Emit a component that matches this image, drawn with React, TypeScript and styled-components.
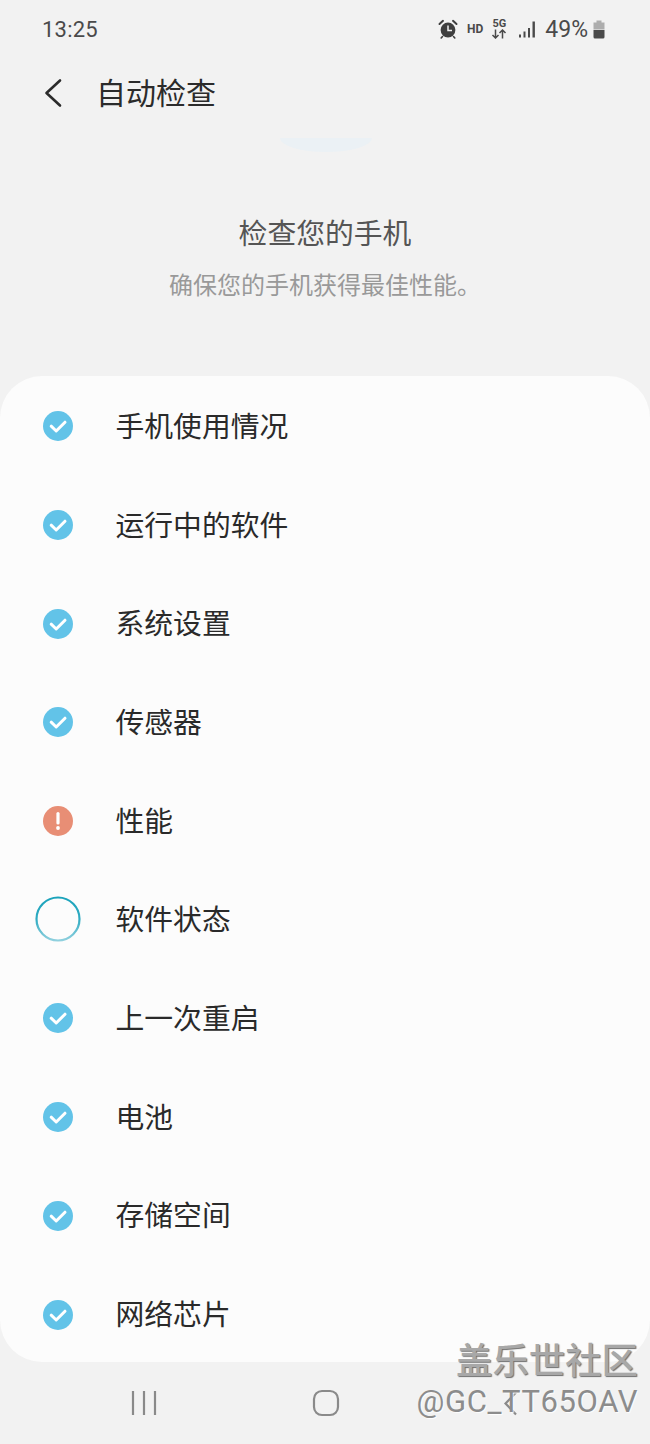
import React from "react";
import styled, { createGlobalStyle } from "styled-components";

const Global = createGlobalStyle`
  html, body { margin: 0; padding: 0; background: #f2f2f2; }
  body { font-family: "Roboto", "Noto Sans CJK SC", sans-serif; }
`;

const CJK = `"Noto Sans CJK SC", "Noto Sans CJK JP", sans-serif`;

const Screen = styled.div`
  position: relative;
  width: 650px;
  height: 1444px;
  overflow: hidden;
  background: #f2f2f2;
  display: flex;
  flex-direction: column;
`;

const StatusBar = styled.div`
  height: 58px;
  padding: 0 44px 0 42px;
  display: flex;
  align-items: center;
  justify-content: space-between;
  color: #4a4a4a;
`;

const Clock = styled.span`
  font: 400 22px Roboto, sans-serif;
  letter-spacing: 0.2px;
`;

const StatusIcons = styled.div`
  display: flex;
  align-items: center;
`;

const HD = styled.span`
  font: 700 12px Roboto, sans-serif;
  margin-left: 9px;
  color: #4a4a4a;
`;

const FiveG = styled.span`
  margin-left: 8px;
  display: flex;
  flex-direction: column;
  align-items: center;
  font: 700 11px/10px Roboto, sans-serif;
`;

const Percent = styled.span`
  font: 400 23px Roboto, sans-serif;
  margin-left: 7px;
`;

const Header = styled.div`
  height: 70px;
  display: flex;
  align-items: center;
  padding-left: 44px;
`;

const Title = styled.h1`
  margin: 0 0 4px 33px;
  font: 400 30px ${CJK};
  color: #2b2b2b;
`;

const Hero = styled.div`
  position: relative;
  height: 248px;
  display: flex;
  flex-direction: column;
  align-items: center;
`;

const Blob = styled.div`
  position: absolute;
  top: 10px;
  left: 280px;
  width: 92px;
  height: 14px;
  border-radius: 0 0 46px 46px / 0 0 14px 14px;
  background: #ebf1f5;
`;

const HeroTitle = styled.h2`
  margin: 83px 0 0;
  height: 42px;
  line-height: 42px;
  font-size: 28.8px;
  font-weight: 400;
  font-family: ${CJK};
  color: #555;
`;

const HeroSub = styled.p`
  margin: 14px 0 0;
  height: 34px;
  line-height: 34px;
  font-size: 24px;
  font-family: ${CJK};
  color: #999;
`;

const Card = styled.div`
  height: 986px;
  box-sizing: border-box;
  padding-top: 1px;
  background: #fcfcfc;
  border-radius: 42px;
`;

const Row = styled.div`
  height: 98.7px;
  display: flex;
  align-items: center;
`;

const IconSlot = styled.div`
  width: 116px;
  padding-left: 35px;
  box-sizing: border-box;
  display: flex;
  align-items: center;
`;

const Label = styled.span`
  font: 400 28.8px ${CJK};
  color: #2a2a2a;
  margin: 0 0 4px -0.5px;
`;

const NavBar = styled.div`
  flex: 1;
  position: relative;
  display: flex;
  align-items: center;
  padding-bottom: 0;
`;

const NavSlot = styled.div<{ $left: number }>`
  margin-left: ${(p) => p.$left}px;
  display: flex;
`;

const Watermark = styled.div`
  position: absolute;
  right: 12px;
  bottom: 22px;
  display: flex;
  flex-direction: column;
  align-items: flex-end;
  color: #8c8c8c;
  text-shadow: 1px 1px 1px rgba(255, 255, 255, 0.9);
`;

const WatermarkTitle = styled.span`
  font: 500 36.4px/44px ${CJK};
  color: #a8a8a8;
  text-shadow: 1px 1px 1px #6f6f6f;
  margin-bottom: 2px;
`;

const WatermarkId = styled.span`
  font: 400 31px/40px Roboto, sans-serif;
  letter-spacing: 0.6px;
`;

const BackOverlay = styled.svg`
  position: absolute;
  left: 503px;
  top: 1391px;
`;

const CheckIcon = () => (
  <svg width="46" height="46" viewBox="0 0 46 46">
    <circle cx="23" cy="23" r="15" fill="#62c3e8" />
    <path d="M16.2 23.2l5 4.8 8.8-8.8" fill="none" stroke="#fff" strokeWidth="3" strokeLinecap="round" strokeLinejoin="round" />
  </svg>
);

const WarnIcon = () => (
  <svg width="46" height="46" viewBox="0 0 46 46">
    <circle cx="23" cy="23" r="15" fill="#e88e75" />
    <path d="M23 15.5v9.5" stroke="#fff" strokeWidth="3.2" strokeLinecap="round" />
    <circle cx="23" cy="30" r="1.9" fill="#fff" />
  </svg>
);

const SpinnerIcon = () => (
  <svg width="46" height="46" viewBox="0 0 46 46" style={{ marginTop: -2 }}>
    <defs>
      <linearGradient id="spin" x1="0" y1="0" x2="0" y2="1">
        <stop offset="0" stopColor="#1ba3bb" />
        <stop offset="0.5" stopColor="#2fabc2" />
        <stop offset="1" stopColor="#8fd0de" />
      </linearGradient>
    </defs>
    <circle cx="23" cy="23" r="21.5" fill="none" stroke="url(#spin)" strokeWidth="2.2" />
  </svg>
);

const icons = { ok: <CheckIcon />, warn: <WarnIcon />, busy: <SpinnerIcon /> };

const items: { label: string; icon: keyof typeof icons }[] = [
  { label: "手机使用情况", icon: "ok" },
  { label: "运行中的软件", icon: "ok" },
  { label: "系统设置", icon: "ok" },
  { label: "传感器", icon: "ok" },
  { label: "性能", icon: "warn" },
  { label: "软件状态", icon: "busy" },
  { label: "上一次重启", icon: "ok" },
  { label: "电池", icon: "ok" },
  { label: "存储空间", icon: "ok" },
  { label: "网络芯片", icon: "ok" },
];

export default function App() {
  return (
    <Screen>
      <Global />
      <StatusBar>
        <Clock>13:25</Clock>
        <StatusIcons>
          <svg width="20" height="20" viewBox="0 0 20 20">
            <circle cx="10" cy="11" r="7.4" fill="#3f3f3f" />
            <path d="M10 6.5V11.5H14" fill="none" stroke="#f2f2f2" strokeWidth="1.5" />
            <path d="M1.5 5L5 1.8M18.5 5L15 1.8" stroke="#3f3f3f" strokeWidth="2" strokeLinecap="round" />
            <path d="M4.5 17.5L3.2 19M15.5 17.5L16.8 19" stroke="#3f3f3f" strokeWidth="1.6" strokeLinecap="round" />
          </svg>
          <HD>HD</HD>
          <FiveG>
            5G
            <svg width="16" height="10" viewBox="0 0 16 10">
              <path d="M4.5 0.5V9M1.5 6L4.5 9L7.5 6M11.5 9.5V1M8.5 4L11.5 1L14.5 4" fill="none" stroke="#4a4a4a" strokeWidth="1.5" />
            </svg>
          </FiveG>
          <svg width="20" height="18" viewBox="0 0 20 18" style={{ marginLeft: 11 }}>
            <path d="M1 14.5h2v3H1zM5.5 11.5h2v6h-2zM10 8h2v9.5h-2zM14.5 1.5h2.4v16h-2.4z" fill="#4a4a4a" />
          </svg>
          <Percent>49%</Percent>
          <svg width="14" height="19" viewBox="0 0 14 19" style={{ marginLeft: 4 }}>
            <path d="M4.5 0.5h5v2h3v7h-11v-7h3z" fill="#adadad" />
            <path d="M1.5 10h11v7a1.5 1.5 0 0 1-1.5 1.5h-8a1.5 1.5 0 0 1-1.5-1.5z" fill="#4a4a4a" />
          </svg>
        </StatusIcons>
      </StatusBar>
      <Header>
        <svg width="20" height="30" viewBox="0 0 20 30" style={{ marginLeft: -1 }}>
          <path d="M17 2.5L3.5 15L17 27.5" fill="none" stroke="#2b2b2b" strokeWidth="2.6" strokeLinecap="round" strokeLinejoin="round" />
        </svg>
        <Title>自动检查</Title>
      </Header>
      <Hero>
        <Blob />
        <HeroTitle>检查您的手机</HeroTitle>
        <HeroSub>确保您的手机获得最佳性能。</HeroSub>
      </Hero>
      <Card>
        {items.map((it) => (
          <Row key={it.label}>
            <IconSlot>{icons[it.icon]}</IconSlot>
            <Label>{it.label}</Label>
          </Row>
        ))}
      </Card>
      <NavBar>
        <NavSlot $left={131}>
          <svg width="26" height="26" viewBox="0 0 26 26">
            <path d="M2 1v24M13 1v24M24 1v24" stroke="#8a8a8a" strokeWidth="2.2" />
          </svg>
        </NavSlot>
        <NavSlot $left={155}>
          <svg width="28" height="28" viewBox="0 0 28 28">
            <rect x="2" y="2" width="24" height="24" rx="8" fill="none" stroke="#8a8a8a" strokeWidth="2.2" />
          </svg>
        </NavSlot>
      </NavBar>
      <BackOverlay width="16" height="26" viewBox="0 0 16 26">
        <path d="M13 1.5L2.5 12.5L13 23.5" fill="none" stroke="#8a8a8a" strokeWidth="2.2" />
      </BackOverlay>
      <Watermark>
        <WatermarkTitle>盖乐世社区</WatermarkTitle>
        <WatermarkId>@GC_TT65OAV</WatermarkId>
      </Watermark>
    </Screen>
  );
}
